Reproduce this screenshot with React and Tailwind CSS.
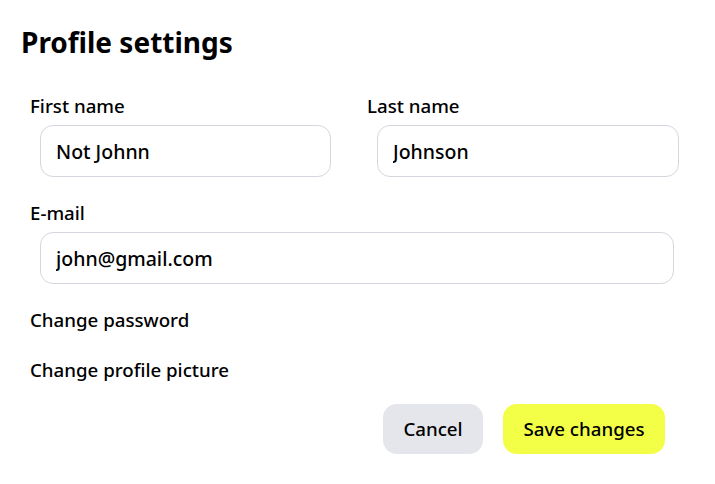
import { useState } from "react";

function Field({ label, value, onChange, className = "" }) {
    return (
        <label className={`flex flex-col ${className}`}>
            <span className="text-[18.7px] leading-[24px] font-medium text-black">
                {label}
            </span>
            <input
                value={value}
                onChange={(e) => onChange(e.target.value)}
                className="mt-[7px] ml-[10px] h-[52px] rounded-[13px] border border-[#d6d6de] bg-white px-[15px] text-[19.5px] font-medium text-black outline-none"
            />
        </label>
    );
}

export default function App() {
    const [form, setForm] = useState({
        firstName: "Not Johnn",
        lastName: "Johnson",
        email: "john@gmail.com",
    });

    const set = (key) => (v) => setForm({ ...form, [key]: v });

    return (
        <div
            className="w-[715px] h-[484px] bg-white pl-[21px] pt-[24px]"
            style={{ fontFamily: '"Noto Sans", sans-serif' }}>
            <h1 className="text-[28px] leading-[36px] font-bold text-black">
                Profile settings
            </h1>

            <div className="mt-[34px] pl-[9px] w-[650px]">
                {/* nombres */}
                <div className="grid grid-cols-[301px_312px] gap-x-[36px]">
                    <Field
                        label="First name"
                        value={form.firstName}
                        onChange={set("firstName")}
                    />
                    <Field
                        label="Last name"
                        value={form.lastName}
                        onChange={set("lastName")}
                    />
                </div>

                <Field
                    label="E-mail"
                    value={form.email}
                    onChange={set("email")}
                    className="mt-[24px] w-[644px]"
                />

                <div className="mt-[24px] flex flex-col gap-[26px] text-[18.7px] leading-[24px] font-medium text-black">
                    <button className="text-left w-fit">Change password</button>
                    <button className="text-left w-fit">
                        Change profile picture
                    </button>
                </div>
            </div>

            <div className="mt-[22px] flex justify-end gap-[20px] pr-[50px] text-[18.7px] font-medium text-black">
                <button className="h-[50px] w-[100px] rounded-[14px] bg-[#e5e6eb]">
                    Cancel
                </button>
                <button className="h-[50px] w-[162px] rounded-[14px] bg-[#f3ff47]">
                    Save changes
                </button>
            </div>
        </div>
    );
}
